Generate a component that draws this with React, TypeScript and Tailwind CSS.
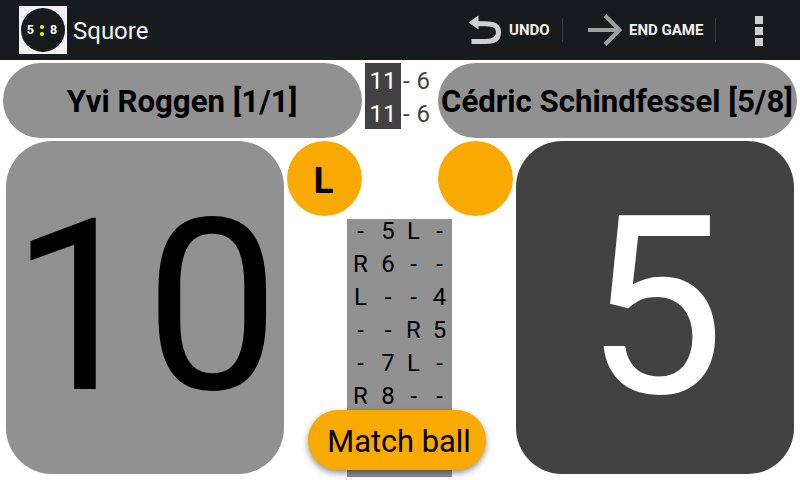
const history: string[][] = [
  ["-", "5", "L", "-"],
  ["R", "6", "-", "-"],
  ["L", "-", "-", "4"],
  ["-", "-", "R", "5"],
  ["-", "7", "L", "-"],
  ["R", "8", "-", "-"],
  ["L", "9", "-", "-"],
  ["R", "10", "-", "-"],
];

const games = [
  { winner: 11, loser: 6 },
  { winner: 11, loser: 6 },
];

function Logo() {
  return (
    <div className="flex size-12 items-center justify-center bg-[#f2f1f6]">
      <div className="flex size-11 items-center justify-center gap-[6px] rounded-full bg-[#171b1d] pr-[2px] text-[12.5px] leading-none font-bold text-white">
        <span>5</span>
        <span className="flex flex-col gap-[3px]">
          <span className="size-1 rounded-full bg-[#fdf200]" />
          <span className="size-1 rounded-full bg-[#fdf200]" />
        </span>
        <span>8</span>
      </div>
    </div>
  );
}

function ActionBar() {
  return (
    <header className="flex h-[60px] items-center bg-[#181b1e] pl-[19px] text-[#f3f3f3]">
      <Logo />
      <h1 className="ml-[6px] pt-px text-[24px] leading-none">Squore</h1>
      <button className="ml-auto flex h-6 w-[95px] items-center border-r border-[#35393b] text-[15px] font-bold">
        <svg width="34" height="32" viewBox="0 0 34 32" className="shrink-0">
          <path d="M3.5 27.5H18C26 27.5 30.5 25 30.5 18.5S26 9.8 18 9.8H10" fill="none" stroke="#cfcfcf" strokeWidth="5" />
          <path d="M0.5 8.5 10.5 1.5V15.5z" fill="#cfcfcf" />
        </svg>
        <span className="ml-[7px] whitespace-nowrap">UNDO</span>
      </button>
      <button className="flex h-6 w-[153px] items-center border-r border-[#35393b] pl-[25px] text-[15px] font-bold">
        <svg width="34" height="32" viewBox="0 0 34 32" className="shrink-0">
          <path d="M0 16H31M17 1.5 31.5 16 17 30.5" fill="none" stroke="#a0a0a0" strokeWidth="4" />
        </svg>
        <span className="ml-[7px] whitespace-nowrap">END GAME</span>
      </button>
      <div className="mr-[37px] ml-[39px] flex flex-col gap-[3px] pt-[2px]">
        <i className="size-2 bg-[#cfcfcf]" />
        <i className="size-2 bg-[#cfcfcf]" />
        <i className="size-2 bg-[#cfcfcf]" />
      </div>
    </header>
  );
}

function PlayerName({ name }: { name: string }) {
  return (
    <div className="flex h-[75px] w-[359px] items-center justify-center rounded-[38px] bg-[#919191] pt-[3px] pr-px text-[31.2px] font-bold whitespace-nowrap text-black">
      {name}
    </div>
  );
}

function ServeSide({ side }: { side: string }) {
  return (
    <div className="flex size-[75px] items-center justify-center rounded-full bg-[#f9aa00] pt-1 pr-[2px] text-[37px] leading-none font-bold">
      {side}
    </div>
  );
}

export default function App() {
  return (
    <div className="relative flex h-[480px] w-[800px] flex-col overflow-hidden bg-white font-['Roboto',sans-serif] text-black">
      <ActionBar />

      <div className="flex h-[78px] justify-between px-[3px] pt-[3px]">
        <PlayerName name="Yvi Roggen [1/1]" />
        <div className="w-[70px] text-[24px] leading-[33px]">
          {games.map((game, i) => (
            <div key={i} className="flex h-[33px]">
              <span className="w-9 bg-[#424242] pt-[2px] text-center text-white">{game.winner}</span>
              <span className="pt-[2px] pl-[2px] text-[#424242] [word-spacing:1px]">- {game.loser}</span>
            </div>
          ))}
        </div>
        <PlayerName name="Cédric Schindfessel [5/8]" />
      </div>

      <main className="flex justify-between px-[6px] pt-[3px]">
        <section className="flex h-[333px] w-[278px] items-center justify-center rounded-[46px] bg-[#919191] text-[239.5px] leading-none">
          10
        </section>
        <div className="flex w-[226px] flex-col">
          <div className="flex w-full justify-between">
            <ServeSide side="L" />
            <ServeSide side="" />
          </div>
          <div className="mt-[3px] ml-[60px] h-[258px] w-[105px] overflow-hidden bg-[#919191] text-[24px] leading-[33px]">
            <div className="-mt-[4px]">
              {history.map((row, i) => (
                <div key={i} className="grid h-[33px] grid-cols-[27px_28px_23px_29px] text-center">
                  {row.map((cell, j) => (
                    <span key={j}>{cell}</span>
                  ))}
                </div>
              ))}
            </div>
          </div>
        </div>
        <section className="flex h-[333px] w-[278px] items-center justify-center rounded-[46px] bg-[#424242] pt-[2px] text-[249px] leading-none text-white">
          5
        </section>
      </main>

      <div className="absolute top-[410px] left-[308px] flex h-[60px] w-[178px] items-center justify-center rounded-full bg-[#f9aa00] pt-[4px] pl-[4px] text-[30.8px] shadow-[0_3px_6px_rgba(0,0,0,0.45)]">
        Match ball
      </div>
    </div>
  );
}
